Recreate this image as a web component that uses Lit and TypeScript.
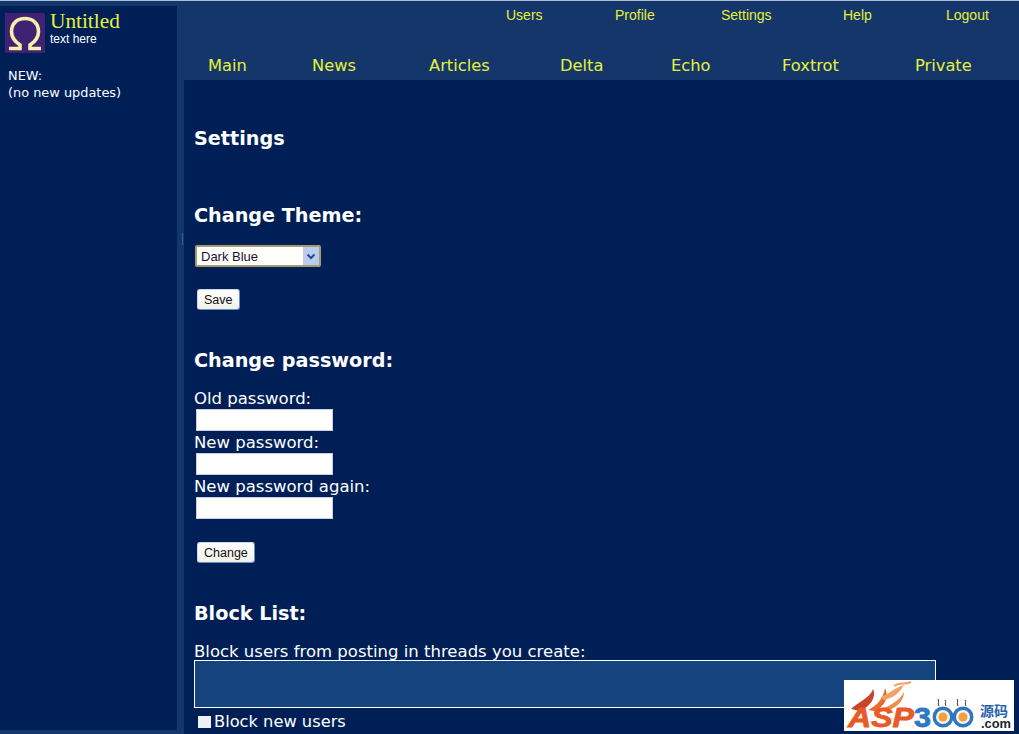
import { LitElement, html, css, svg } from "lit";
import { customElement } from "lit/decorators.js";

@customElement("app-root")
export class AppRoot extends LitElement {
  static styles = css`
    :host { display: block; width: 1019px; height: 734px; overflow: hidden; position: relative; background: #14366a; font-family: "DejaVu Sans", Verdana, sans-serif; color: #fff; }
    .topline { height: 1px; background: #a9bdd6; }
    .shell { display: grid; grid-template-columns: 177px 1fr; column-gap: 7px; height: 733px; }
    .side { margin-top: 5px; height: 724px; background: #001f57; padding: 7px 0 0 5px; box-sizing: border-box; }
    .brand { display: flex; gap: 5px; height: 40px; }
    .omega { display: block; width: 40px; height: 40px; background: #3f2274; }
    .title { color: #e6f03c; font: 21.3px/16px "Liberation Serif", serif; }
    .sub { color: #fff; font: 12px/13px "Liberation Sans", sans-serif; margin-top: 4px; }
    .new { margin: 14px 0 0 3px; font-size: 12.9px; line-height: 17px; }
    .right { display: flex; flex-direction: column; min-width: 0; }
    .nav1, .nav2 { display: grid; color: #e6f03c; }
    .nav1 { grid-template-columns: 109px 106px 122px 103px auto; padding: 6px 0 0 322px; font: 14px/16px "Liberation Sans", sans-serif; height: 25px; }
    .nav2 { grid-template-columns: 104px 117px 131px 111px 111px 133px auto; padding: 24px 0 0 24px; font-size: 16.3px; line-height: 19px; height: 24px; }
    .main { flex: 1; background: #001f57; padding: 47px 0 0 10px; font-size: 16.5px; line-height: 22px; }
    h2 { margin: 0; font-size: 19.2px; line-height: 23px; font-weight: bold; }
    .h-theme { margin-top: 54px; }
    .sel { position: relative; margin: 18px 0 0 1px; width: 126px; height: 22px; }
    select { appearance: none; display: block; width: 100%; height: 100%; box-sizing: border-box; font: 13px "Liberation Sans", sans-serif; background: #fffffa; color: #1c1040; border: 2px solid #a89a70; border-radius: 2px; padding: 0 0 0 4px; }
    .arrow { position: absolute; right: 2px; top: 2px; display: block; width: 16px; height: 18px; background: #b9cdee; pointer-events: none; }
    button { display: block; margin-left: 3px; height: 21px; padding: 0 6px; box-sizing: border-box; font: 12.5px "Liberation Sans", sans-serif; color: #111; background: linear-gradient(#fff, #f1f0e8); border: 1px solid #cfd8e6; border-right-color: #6d8fc0; border-bottom-color: #6d8fc0; border-radius: 3px; }
    .save { margin-top: 22px; }
    .h-pass { margin-top: 39px; }
    .fields { margin-top: 15px; }
    .fields label { display: block; height: 22px; line-height: 24px; }
    .fields input { display: block; margin: 0 0 0 2px; width: 137px; height: 22px; box-sizing: border-box; border: 1px solid #ccd; background: #fff; padding: 0; }
    .change { margin-top: 23px; }
    .h-block { margin-top: 39px; }
    .blocktext { margin-top: 15px; height: 20px; line-height: 24px; white-space: nowrap; }
    .area { width: 742px; height: 48px; box-sizing: border-box; border: 1px solid #fff; background: #15437d; }
    .chk { display: flex; align-items: center; gap: 3px; margin: 4px 0 0 4px; height: 20px; font-size: 16.25px; }
    .box { width: 13px; height: 12px; background: #eef2f6; }
    .tick { position: absolute; left: 182px; top: 233px; width: 1px; height: 12px; background: #2a6a70; }
    .mark { position: absolute; left: 844px; top: 680px; width: 170px; height: 51px; background: #fff; overflow: hidden; }
    .mark svg { display: block; }
    .asp { font: italic bold 27px "Liberation Sans", sans-serif; fill: #e85a28; stroke: #e85a28; stroke-width: 0.8px; }
    .three { font: bold 27px "Liberation Sans", sans-serif; fill: #2e79c4; stroke: #2e79c4; stroke-width: 0.8px; }
    .cn { font: bold 14px "Noto Sans CJK SC", sans-serif; fill: #2a62ad; }
    .com { font: bold 13px "Liberation Sans", sans-serif; fill: #1b2430; }
  `;

  render() {
    return html`
      <div class="topline"></div>
      <div class="shell">
        <aside class="side">
          <div class="brand">
            <svg class="omega" viewBox="0 0 40 40" fill="none" stroke="#f7eea8" stroke-width="3.6">
              <path d="M4 35.5 H15 V32 C9 28 6.5 24 6.5 18.5 C6.5 10 12.5 5.5 20 5.5 C27.5 5.5 33.5 10 33.5 18.5 C33.5 24 31 28 25 32 V35.5 H36" />
            </svg>
            <div><div class="title">Untitled</div><div class="sub">text here</div></div>
          </div>
          <div class="new">NEW:<br />(no new updates)</div>
        </aside>
        <div class="right">
          <nav class="nav1"><span>Users</span><span>Profile</span><span>Settings</span><span>Help</span><span>Logout</span></nav>
          <nav class="nav2"><span>Main</span><span>News</span><span>Articles</span><span>Delta</span><span>Echo</span><span>Foxtrot</span><span>Private</span></nav>
          <main class="main">
            <h2>Settings</h2>
            <h2 class="h-theme">Change Theme:</h2>
            <div class="sel">
              <select><option>Dark Blue</option></select>
              <svg class="arrow" viewBox="0 0 16 18" fill="none" stroke="#2f4a8c" stroke-width="2"><path d="M4.5 7.5 L8 11 L11.5 7.5" /></svg>
            </div>
            <button class="save">Save</button>
            <h2 class="h-pass">Change password:</h2>
            <div class="fields">
              <label>Old password:</label><input type="password" />
              <label>New password:</label><input type="password" />
              <label>New password again:</label><input type="password" />
            </div>
            <button class="change">Change</button>
            <h2 class="h-block">Block List:</h2>
            <div class="blocktext">Block users from posting in threads you create:</div>
            <div class="area"></div>
            <div class="chk"><span class="box"></span>Block new users</div>
          </main>
        </div>
      </div>
      <div class="tick"></div>
      <div class="mark">
        <svg width="170" height="51" viewBox="0 0 170 51">
          ${svg`
          <path d="M7 29 C14 22 26 18 29 9 C33 18 25 27 16 31 Z" fill="#c8452a"/>
          <path d="M24 30 C32 26 39 20 41 8 C46 18 39 28 30 31 Z" fill="#ea6a30"/>
          <path d="M36 30 C44 26 55 22 60 12 C60 22 50 30 40 31 Z" fill="#f08a48"/>
          <path d="M37 17 C45 14 50 8 60 5 C56 12 50 18 40 20 Z" fill="#f4a262"/>
          <path d="M50 6 C56 2 60 5 67 2" stroke="#f4a262" stroke-width="2" fill="none"/>
          <text class="asp" x="4" y="47" textLength="66" lengthAdjust="spacingAndGlyphs">ASP</text>
          <text class="three" x="70" y="47" textLength="17" lengthAdjust="spacingAndGlyphs">3</text>
          <circle cx="99" cy="37" r="10.5" fill="#2f76c0"/><circle cx="99" cy="37" r="7" fill="#f6f3e6"/><circle cx="99" cy="37" r="4.5" fill="#f0a040"/>
          <circle cx="119" cy="37" r="10.5" fill="#2f76c0"/><circle cx="119" cy="37" r="7" fill="#f6f3e6"/><circle cx="119" cy="37" r="4.5" fill="#f0a040"/>
          <path d="M95 26 C93 23 96 22 94 19 M102 26 C100 23 103 22 101 20 M114 26 C112 23 115 22 113 19 M122 26 C120 23 123 22 121 20" stroke="#333" stroke-width="1" fill="none"/>
          <text class="cn" x="136" y="36">源码</text>
          <text class="com" x="137" y="48" textLength="30" lengthAdjust="spacingAndGlyphs">.com</text>
          `}
        </svg>
      </div>
    `;
  }
}
